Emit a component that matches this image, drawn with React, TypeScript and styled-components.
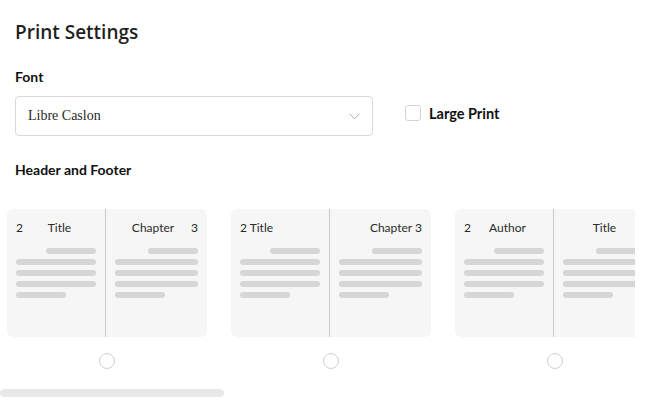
import React from "react";
import styled, { createGlobalStyle } from "styled-components";

const Global = createGlobalStyle`
  html, body { margin: 0; padding: 0; background: #fff; }
  body { font-family: "Lato", "Open Sans", sans-serif; color: #1d1d1f; }
  * { box-sizing: border-box; }
`;

const Page = styled.div`
  width: 657px;
  padding-top: 17px;
`;

const Section = styled.div`
  padding: 0 15px;
`;

const Title = styled.h1`
  margin: 0;
  font-family: "Open Sans", sans-serif;
  font-weight: 600;
  font-size: 19px;
  line-height: 30px;
  color: #1f1f1f;
`;

const Label = styled.div<{ $top: number }>`
  margin-top: ${(p) => p.$top}px;
  font-family: "Lato", sans-serif;
  font-weight: 700;
  font-size: 14px;
  line-height: 20px;
  color: #111;
`;

const FontRow = styled.div`
  margin-top: 9px;
  display: flex;
  align-items: center;
  gap: 32px;
`;

const Select = styled.div`
  width: 358px;
  height: 40px;
  border: 1px solid #d9d9d9;
  border-radius: 4px;
  display: flex;
  align-items: center;
  justify-content: space-between;
  padding: 0 12px 0 12px;
`;

const SelectValue = styled.span`
  font-family: "Liberation Serif", "DejaVu Serif", serif;
  font-size: 14px;
  color: #2a2a2a;
`;

const CheckLabel = styled.label`
  display: flex;
  align-items: center;
  gap: 8px;
  margin-top: -6px;
  font-family: "Lato", sans-serif;
  font-weight: 700;
  font-size: 14.5px;
  color: #111;
`;

const Box = styled.span`
  width: 16px;
  height: 16px;
  border: 1px solid #d4d4d4;
  border-radius: 3px;
  background: #fff;
`;

const Gallery = styled.div`
  margin-top: 29px;
  width: 635px;
`;

const Scroller = styled.div`
  width: 635px;
  overflow: hidden;
  padding: 0 7px 20px;
  display: flex;
  gap: 24px;
`;

const Track = styled.div`
  width: 635px;
  height: 8px;
`;

const Thumb = styled.div`
  height: 8px;
  border-radius: 4px;
  background: #e8e8eb;
`;

const Option = styled.div`
  flex: 0 0 200px;
  display: flex;
  flex-direction: column;
  align-items: center;
  gap: 16px;
`;

const Spread = styled.div`
  width: 200px;
  height: 128px;
  background: #f6f6f6;
  border-radius: 6px;
  display: grid;
  grid-template-columns: 99px 101px;
`;

const PageHalf = styled.div<{ $left?: boolean }>`
  padding: 10px 9px 0;
  border-right: ${(p) => (p.$left ? "1px solid #c9c9c9" : "none")};
  display: flex;
  flex-direction: column;
  gap: 5px;
`;

const Head = styled.div`
  display: flex;
  align-items: center;
  height: 16px;
  margin-bottom: 8px;
  font-family: "Lato", sans-serif;
  font-weight: 400;
  font-size: 12px;
  color: #2b2b2b;
  white-space: nowrap;
`;

const HeadText = styled.span<{ $align: string }>`
  flex: 1;
  text-align: ${(p) => p.$align};
`;

const Line = styled.div<{ $short?: boolean; $right?: boolean }>`
  height: 6px;
  border-radius: 3px;
  background: #d6d6d6;
  width: ${(p) => (p.$short ? "50px" : "100%")};
  margin-left: ${(p) => (p.$right ? "auto" : "0")};
`;

const Radio = styled.span`
  width: 16px;
  height: 16px;
  border-radius: 50%;
  border: 1px solid #cfcfcf;
  background: #fff;
`;

type Side = { num?: string; text?: string; numFirst: boolean; align: string };
type Layout = { left: Side; right: Side };

const layouts: Layout[] = [
  { left: { num: "2", text: "Title", numFirst: true, align: "center" }, right: { num: "3", text: "Chapter", numFirst: false, align: "center" } },
  { left: { text: "2 Title", numFirst: true, align: "left" }, right: { text: "Chapter 3", numFirst: false, align: "right" } },
  { left: { num: "2", text: "Author", numFirst: true, align: "center" }, right: { text: "Title", numFirst: false, align: "center" } },
];

const Half: React.FC<{ side: Side; left?: boolean }> = ({ side, left }) => (
  <PageHalf $left={left}>
    <Head>
      {side.numFirst && side.num && <span>{side.num}</span>}
      <HeadText $align={side.align}>{side.text}</HeadText>
      {!side.numFirst && side.num && <span>{side.num}</span>}
    </Head>
    <Line $short $right />
    <Line />
    <Line />
    <Line />
    <Line $short />
  </PageHalf>
);

const Chevron = () => (
  <svg width="11" height="7" viewBox="0 0 11 7" fill="none">
    <path d="M0.5 0.8 L5.5 5.8 L10.5 0.8" stroke="#a9a9a9" strokeWidth="1" />
  </svg>
);

const visibleRatio = 224 / 635;

export default function App() {
  return (
    <Page>
      <Global />
      <Section>
        <Title>Print Settings</Title>
        <Label $top={20}>Font</Label>
        <FontRow>
          <Select>
            <SelectValue>Libre Caslon</SelectValue>
            <Chevron />
          </Select>
          <CheckLabel>
            <Box />
            Large Print
          </CheckLabel>
        </FontRow>
        <Label $top={24}>Header and Footer</Label>
      </Section>
      <Gallery>
        <Scroller>
          {layouts.map((l, i) => (
            <Option key={i}>
              <Spread>
                <Half side={l.left} left />
                <Half side={l.right} />
              </Spread>
              <Radio />
            </Option>
          ))}
        </Scroller>
        <Track>
          <Thumb style={{ width: `${visibleRatio * 100}%` }} />
        </Track>
      </Gallery>
    </Page>
  );
}
